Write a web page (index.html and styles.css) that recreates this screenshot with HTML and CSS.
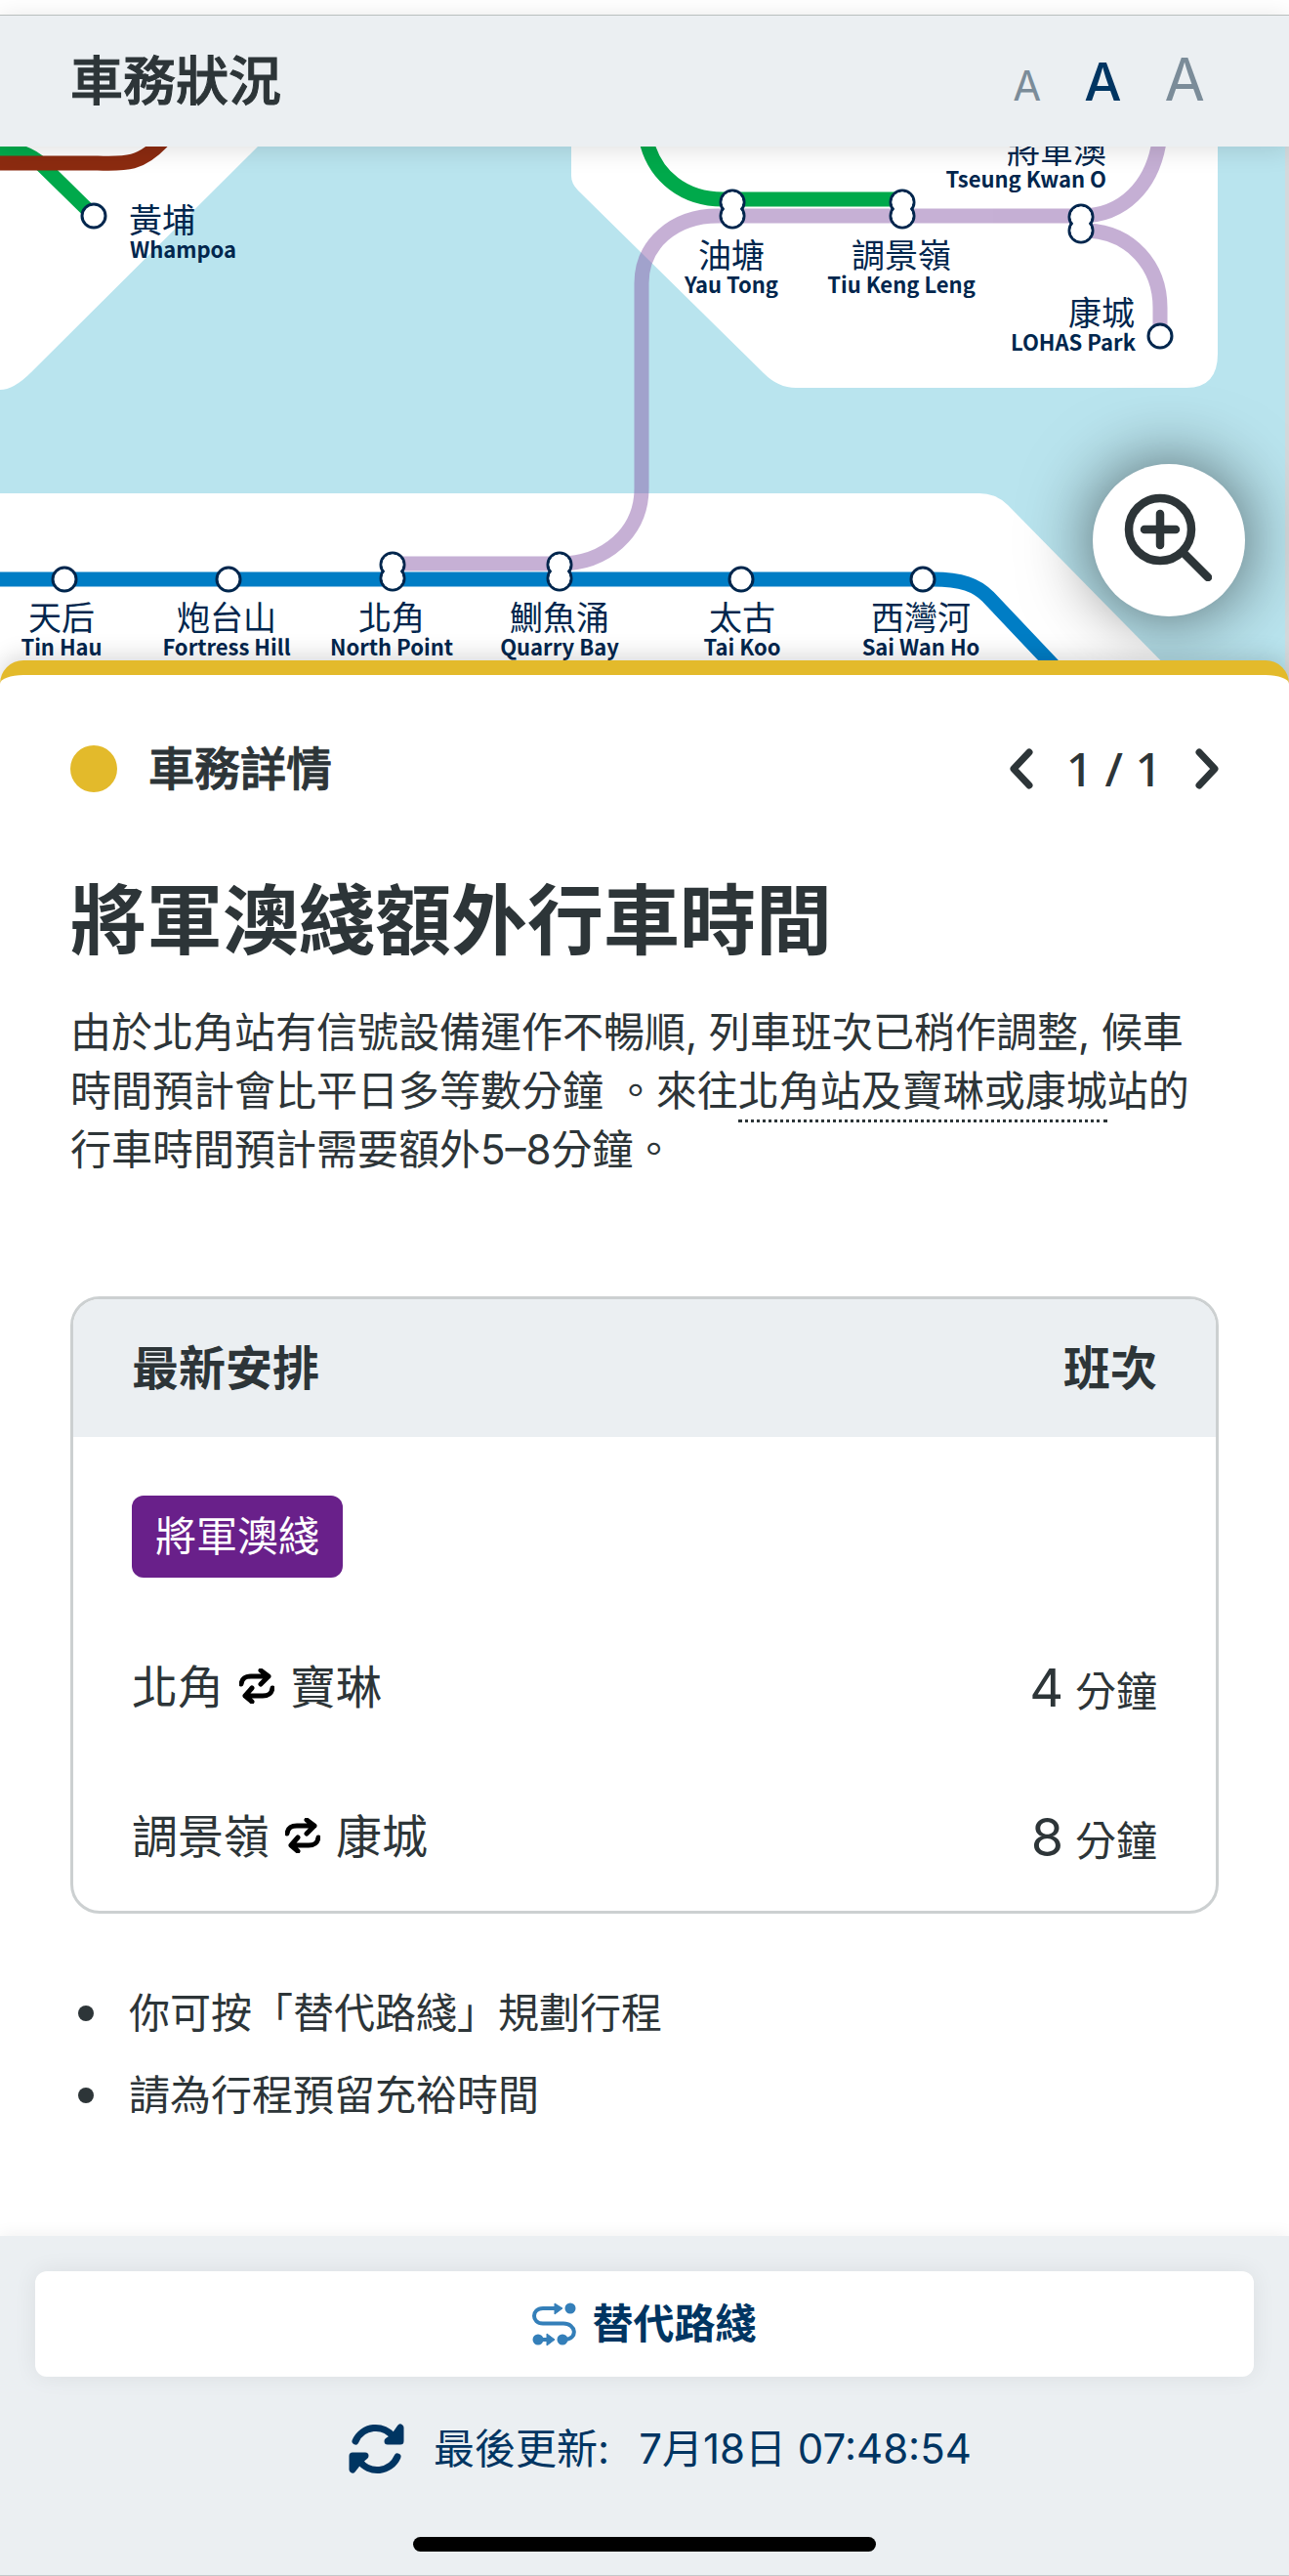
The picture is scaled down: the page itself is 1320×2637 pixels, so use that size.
FILE: index.html
```html
<!DOCTYPE html>
<html lang="zh-Hant">
<head>
<meta charset="utf-8">
<meta name="viewport" content="width=device-width, initial-scale=1">
<title>車務狀況</title>
<link rel="stylesheet" href="styles.css">
</head>
<body>
<header class="topbar">
  <h1 class="topbar-title">車務狀況</h1>
  <div class="text-size" role="group" aria-label="字體大小">
    <button type="button" class="size-btn size-s">A</button>
    <button type="button" class="size-btn size-m is-active" aria-pressed="true">A</button>
    <button type="button" class="size-btn size-l">A</button>
  </div>
</header>

<section class="map" aria-label="路綫圖">
  <svg class="map-art" viewBox="0 150 1320 550" role="img" aria-label="港鐵路綫圖">
    <defs>
      <g id="stop"><circle r="12" fill="#fff" stroke="#00264d" stroke-width="3"/></g>
      <g id="interchange">
        <circle cy="-7" r="12" fill="#fff" stroke="#00264d" stroke-width="3"/>
        <circle cy="7" r="12" fill="#fff" stroke="#00264d" stroke-width="3"/>
        <circle cy="-7" r="10.5" fill="#fff"/>
        <circle cy="7" r="10.5" fill="#fff"/>
      </g>
    </defs>
    <rect y="150" width="1320" height="550" fill="#b9e4ee"/>
    <!-- land -->
    <g fill="#fff">
      <path d="M0 150H264L32 381Q14 399 0 399Z"/>
      <path d="M585 150V180Q585 188 592 195L782 382Q797 397 815 397H1215Q1247 397 1247 362V150Z"/>
      <path d="M0 505H1003Q1020 505 1032 517L1212 700H0Z"/>
    </g>
    <rect x="1316" y="150" width="4" height="550" fill="#d3d9dc"/>
    <!-- lines -->
    <g fill="none" stroke-width="15">
      <path stroke="#00a94b" d="M0 153Q26 153 42 168L92 217"/>
      <path stroke="#8c2b10" d="M0 167H100C130 168 144 168 166 145"/>
      <path stroke="#00a94b" d="M663 148C672 180 700 204 740 204H924"/>
      <path stroke="#007dc5" d="M0 593H955C985 593 1000 599 1012 611L1100 704"/>
      <g stroke="#8657a6" opacity=".47">
        <path d="M402 577H573C620 577 657 545 657 500V290C657 250 690 221 735 221H1107C1150 221 1180 190 1187 145"/>
        <path d="M1114 236C1158 238 1188 272 1188 315V344"/>
      </g>
    </g>
    <!-- stations -->
    <use href="#stop" x="96" y="221"/>
    <use href="#stop" x="1188" y="344"/>
    <use href="#stop" x="66" y="593"/>
    <use href="#stop" x="234" y="593"/>
    <use href="#stop" x="759" y="593"/>
    <use href="#stop" x="945" y="593"/>
    <use href="#interchange" x="750" y="214"/>
    <use href="#interchange" x="924" y="214"/>
    <use href="#interchange" x="1107" y="229"/>
    <use href="#interchange" x="402" y="585"/>
    <use href="#interchange" x="573" y="585"/>
    <!-- names -->
    <g class="name-start">
      <text class="name-zh" x="132" y="238">黃埔</text><text class="name-en" x="133" y="264">Whampoa</text>
    </g>
    <g class="name-mid">
      <text class="name-zh" x="749" y="274">油塘</text><text class="name-en" x="749" y="300">Yau Tong</text>
      <text class="name-zh" x="923" y="274">調景嶺</text><text class="name-en" x="923" y="300">Tiu Keng Leng</text>
      <text class="name-zh" x="63" y="645">天后</text><text class="name-en" x="63" y="671">Tin Hau</text>
      <text class="name-zh" x="232" y="645">炮台山</text><text class="name-en" x="232" y="671">Fortress Hill</text>
      <text class="name-zh" x="401" y="645">北角</text><text class="name-en" x="401" y="671">North Point</text>
      <text class="name-zh" x="573" y="645">鰂魚涌</text><text class="name-en" x="573" y="671">Quarry Bay</text>
      <text class="name-zh" x="760" y="645">太古</text><text class="name-en" x="760" y="671">Tai Koo</text>
      <text class="name-zh" x="943" y="645">西灣河</text><text class="name-en" x="943" y="671">Sai Wan Ho</text>
    </g>
    <g class="name-end">
      <text class="name-zh" x="1133" y="167">將軍澳</text><text class="name-en" x="1133" y="192">Tseung Kwan O</text>
      <text class="name-zh" x="1162" y="333">康城</text><text class="name-en" x="1163" y="359">LOHAS Park</text>
    </g>
  </svg>
  <button type="button" class="zoom-btn" aria-label="放大">
    <svg viewBox="0 0 90 90" width="90" height="90" fill="none" stroke="#2d3538" stroke-width="8.5" stroke-linecap="round">
      <circle cx="37" cy="37" r="32"/><path d="M61 61L86 86M21 37H53M37 21V53"/>
    </svg>
  </button>
</section>

<main class="sheet">
  <div class="sheet-head">
    <span class="status-dot"></span>
    <h2 class="sheet-label">車務詳情</h2>
    <nav class="pager" aria-label="頁">
      <button type="button" class="pager-btn" aria-label="上一則">
        <svg viewBox="0 0 24 42" width="24" height="42"><path d="M20 4L4 21L20 38"/></svg>
      </button>
      <span class="pager-count">1 / 1</span>
      <button type="button" class="pager-btn" aria-label="下一則">
        <svg viewBox="0 0 24 42" width="24" height="42"><path d="M4 4L20 21L4 38"/></svg>
      </button>
    </nav>
  </div>

  <h3 class="headline">將軍澳綫額外行車時間</h3>
  <p class="details">由於北角站有信號設備運作不暢順, 列車班次已稍作調整, 候車時間預計會比平日多等數分鐘 。來往<span class="dotted">北角站及寶琳或康城</span>站的行車時間預計需要額外5–8分鐘。</p>

  <div class="card">
    <table class="schedule">
      <thead>
        <tr><th scope="col">最新安排</th><th scope="col" class="freq">班次</th></tr>
      </thead>
      <tbody>
        <tr><th colspan="2" scope="rowgroup" class="line-cell"><span class="line-badge">將軍澳綫</span></th></tr>
        <tr>
          <td>北角<svg class="swap" viewBox="0 0 36 36" width="36" height="36"><path d="M2 16C3 9 7 8 12 8H30M22 2L30 8L22 16M34 20C33 27 29 28 24 28H6M13 20L6 28L13 34"/></svg>寶琳</td>
          <td class="freq"><span class="minutes">4</span> 分鐘</td>
        </tr>
        <tr>
          <td>調景嶺<svg class="swap" viewBox="0 0 36 36" width="36" height="36"><path d="M2 16C3 9 7 8 12 8H30M22 2L30 8L22 16M34 20C33 27 29 28 24 28H6M13 20L6 28L13 34"/></svg>康城</td>
          <td class="freq"><span class="minutes">8</span> 分鐘</td>
        </tr>
      </tbody>
    </table>
  </div>

  <ul class="tips">
    <li>你可按「替代路綫」規劃行程</li>
    <li>請為行程預留充裕時間</li>
  </ul>
</main>

<footer class="bottom">
  <button type="button" class="alt-btn">
    <svg viewBox="0 0 45 45" width="45" height="45">
      <path d="M25 6H11C-1 6 -1 21.500 11 21.500H32C45 21.500 47 37 34 38" fill="none" stroke="#347fb9" stroke-width="4"/>
      <path d="M23 1V12L31 6ZM15 32V44L23 38Z" fill="#347fb9" stroke="#347fb9" stroke-linejoin="round"/>
      <path d="M5 38H17" stroke="#347fb9" stroke-width="4"/>
      <circle cx="39" cy="6" r="5.500" fill="#347fb9"/><circle cx="6" cy="38" r="5.500" fill="#347fb9"/><circle cx="31" cy="38" r="5.500" fill="#347fb9"/>
    </svg>
    替代路綫
  </button>
  <button type="button" class="refresh">
    <svg viewBox="0 0 57 54" width="57" height="54" fill="none" stroke="#003562" stroke-width="7" stroke-linecap="round">
      <path d="M7 19A22.500 22.500 0 0 1 46 15M50 35A22.500 22.500 0 0 1 11 39"/>
      <path d="M53 5V19H40L46 15ZM4 48V34H17L11 39Z" stroke-linejoin="round" fill="#003562"/>
    </svg>
    <span>最後更新:</span>
    <time datetime="07-18T07:48:54">7月18日 07:48:54</time>
  </button>
  <div class="home-bar"></div>
</footer>
</body>
</html>
```

FILE: styles.css
```css
* {
  box-sizing: border-box;
}

body {
  margin: 0;
  padding-top: 15px;
  min-height: 100vh;
  display: flex;
  flex-direction: column;
  background: #fff;
  color: #2d3538;
  font-family: Inter, "Noto Sans CJK TC", sans-serif;
}

h1, h2, h3, p, ul {
  margin: 0;
}

button {
  margin: 0;
  padding: 0;
  border: 0;
  background: none;
  color: inherit;
  font: inherit;
  cursor: pointer;
}

svg {
  flex: none;
}

/* top bar */
.topbar {
  position: relative;
  z-index: 1;
  display: flex;
  align-items: center;
  justify-content: space-between;
  padding: 32px 86px 30px 72px;
  border-top: 1px solid #b9bfbe;
  background: #ebeff2;
  box-shadow: 0 4px 24px rgba(0, 0, 0, .12);
}

.topbar-title {
  font-size: 54px;
  line-height: 72px;
  font-weight: 500;
  -webkit-text-stroke: 1px currentColor;
}

.text-size {
  display: flex;
  align-items: baseline;
  gap: 44px;
}

.size-btn {
  color: #7b8c99;
  line-height: 60px;
}

.size-s { font-size: 42px; }
.size-m { font-size: 54px; }
.size-l { font-size: 60px; }

.size-btn.is-active {
  color: #003562;
  font-weight: 500;
}

/* map */
.map {
  position: relative;
  overflow: hidden;
}

.map-art {
  display: block;
  width: 100%;
  height: auto;
}

.map text {
  fill: #00264d;
  font-family: "Noto Sans CJK TC", sans-serif;
}

.name-zh { font-size: 34px; }
.name-en { font-size: 22px; font-weight: 700; }
.name-mid { text-anchor: middle; }
.name-end { text-anchor: end; }

.zoom-btn {
  position: absolute;
  right: 45px;
  bottom: 69px;
  display: flex;
  align-items: center;
  justify-content: center;
  width: 156px;
  height: 156px;
  padding: 0 2px 6px 0;
  border-radius: 50%;
  background: #fff;
  box-shadow: 0 0 72px rgba(0, 0, 0, .6);
}

/* sheet */
.sheet {
  position: relative;
  flex: 1;
  margin-top: -24px;
  padding: 60px 72px 72px;
  border-top: 15px solid #e3ba2b;
  border-radius: 24px 24px 0 0;
  background: #fff;
  box-shadow: 0 -4px 24px rgba(0, 0, 0, .16);
}

.sheet-head {
  display: flex;
  align-items: center;
}

.status-dot {
  width: 48px;
  height: 48px;
  margin-right: 32px;
  border-radius: 50%;
  background: #e3ba2b;
}

.sheet-label {
  font-size: 47px;
  line-height: 72px;
  font-weight: 500;
  -webkit-text-stroke: 1px currentColor;
}

.pager {
  display: flex;
  align-items: center;
  gap: 34px;
  margin-left: auto;
}

.pager-btn {
  display: flex;
}

.pager-btn path {
  fill: none;
  stroke: #2d3538;
  stroke-width: 7;
  stroke-linecap: round;
  stroke-linejoin: round;
}

.pager-count {
  font-family: "Noto Sans", sans-serif;
  font-size: 48px;
  line-height: 72px;
  font-weight: 500;
}

.headline {
  margin-top: 72px;
  font-size: 78px;
  line-height: 96px;
  font-weight: 700;
}

.details {
  margin-top: 36px;
  font-size: 42px;
  line-height: 60px;
}

.dotted {
  padding-bottom: 4px;
  border-bottom: 3px dotted #2d3538;
}

.card {
  margin-top: 120px;
  overflow: hidden;
  border: 3px solid #ccd0d1;
  border-radius: 30px;
}

.schedule {
  width: 100%;
  border-collapse: collapse;
  font-size: 47px;
  line-height: 57px;
}

.schedule th,
.schedule td {
  padding: 48px 60px;
  text-align: left;
}

.schedule thead th {
  padding: 42px 60px;
  background: #ebeff2;
  font-size: 48px;
  font-weight: 700;
}

.schedule .line-cell {
  padding: 60px 60px 35px;
  font-weight: 400;
}

.line-badge {
  display: block;
  width: max-content;
  padding: 12px 24px;
  border-radius: 12px;
  background: #69208a;
  color: #fff;
  font-size: 42px;
  line-height: 60px;
}

.schedule .freq {
  text-align: right;
}

.schedule td.freq {
  padding-top: 52px;
  padding-bottom: 42px;
  font-size: 42px;
}

.minutes {
  font-size: 54px;
  line-height: 48px;
}

.swap {
  margin: 0 16px;
  fill: none;
  stroke: #000;
  stroke-width: 5;
  stroke-linecap: round;
  stroke-linejoin: round;
}

.tips {
  margin-top: 60px;
  padding: 0;
  list-style: none;
  font-size: 42px;
  line-height: 84px;
}

.tips li {
  display: flex;
  align-items: center;
  gap: 36px;
  padding-left: 8px;
}

.tips li::before {
  content: "";
  width: 16px;
  height: 16px;
  border-radius: 50%;
  background: #2d3538;
}

/* bottom bar */
.bottom {
  position: relative;
  display: flex;
  flex-direction: column;
  align-items: center;
  padding: 36px 36px 24px;
  border-bottom: 1px solid #c3c8ca;
  background: #ebeff2;
  box-shadow: 0 -2px 16px rgba(0, 0, 0, .06);
  color: #003562;
  font-size: 42px;
}

.alt-btn {
  display: flex;
  align-items: center;
  justify-content: center;
  gap: 16px;
  align-self: stretch;
  padding: 24px;
  border-radius: 12px;
  background: #fff;
  box-shadow: 0 0 24px rgba(0, 0, 0, .07);
  line-height: 60px;
  font-weight: 700;
}

.refresh {
  display: flex;
  align-items: center;
  gap: 30px;
  margin-top: 38px;
  padding-left: 32px;
  line-height: 72px;
}

.home-bar {
  width: 38%;
  height: 15px;
  margin-top: 54px;
  border-radius: 8px;
  background: #000;
}
```
